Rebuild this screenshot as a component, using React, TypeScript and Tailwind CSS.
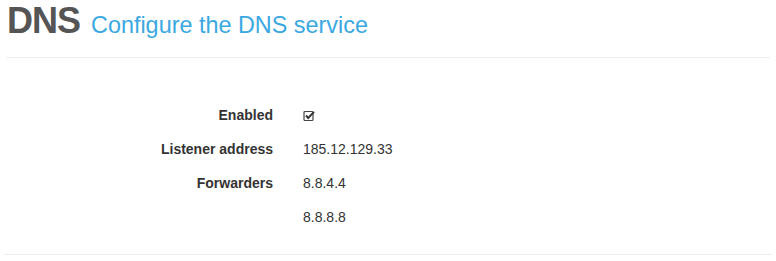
const rows: { label: string; value: React.ReactNode }[] = [
    {
        label: 'Enabled',
        value: (
            <svg width="12" height="12" viewBox="0 0 12 12" className="mt-[1px]">
                <rect x="1" y="1.5" width="9" height="9" rx="1" fill="none" stroke="#444" strokeWidth="1.2" />
                <path d="M3 5.5 L5.2 8 L11 1.8" fill="none" stroke="#333" strokeWidth="1.9" />
            </svg>
        ),
    },
    { label: 'Listener address', value: '185.12.129.33' },
    { label: 'Forwarders', value: '8.8.4.4' },
    { label: '', value: '8.8.8.8' },
];

export default function App() {
    return (
        <div className="w-[776px] h-[261px] bg-white font-['Liberation_Sans',Arial,sans-serif] text-[#333]">
            <div className="mx-[6px] pt-[1px] pb-[14px] border-b border-[#eeeeee] flex items-baseline">
                <h1 className="text-[36px] leading-[40px] font-bold text-[#555] tracking-[-1px] ml-[1px]">DNS</h1>
                <span className="ml-[11px] text-[23.4px] text-[#3ba8e2]">Configure the DNS service</span>
            </div>
            <div className="mx-[4px] h-[197px] border-b border-[#eeeeee] pt-[40px]">
                {rows.map((r, i) => (
                    <div key={i} className="flex items-center h-[34px] text-[14px]">
                        <div className="w-[269px] text-right font-bold">{r.label}</div>
                        <div className="ml-[30px] flex items-center">{r.value}</div>
                    </div>
                ))}
            </div>
        </div>
    );
}
